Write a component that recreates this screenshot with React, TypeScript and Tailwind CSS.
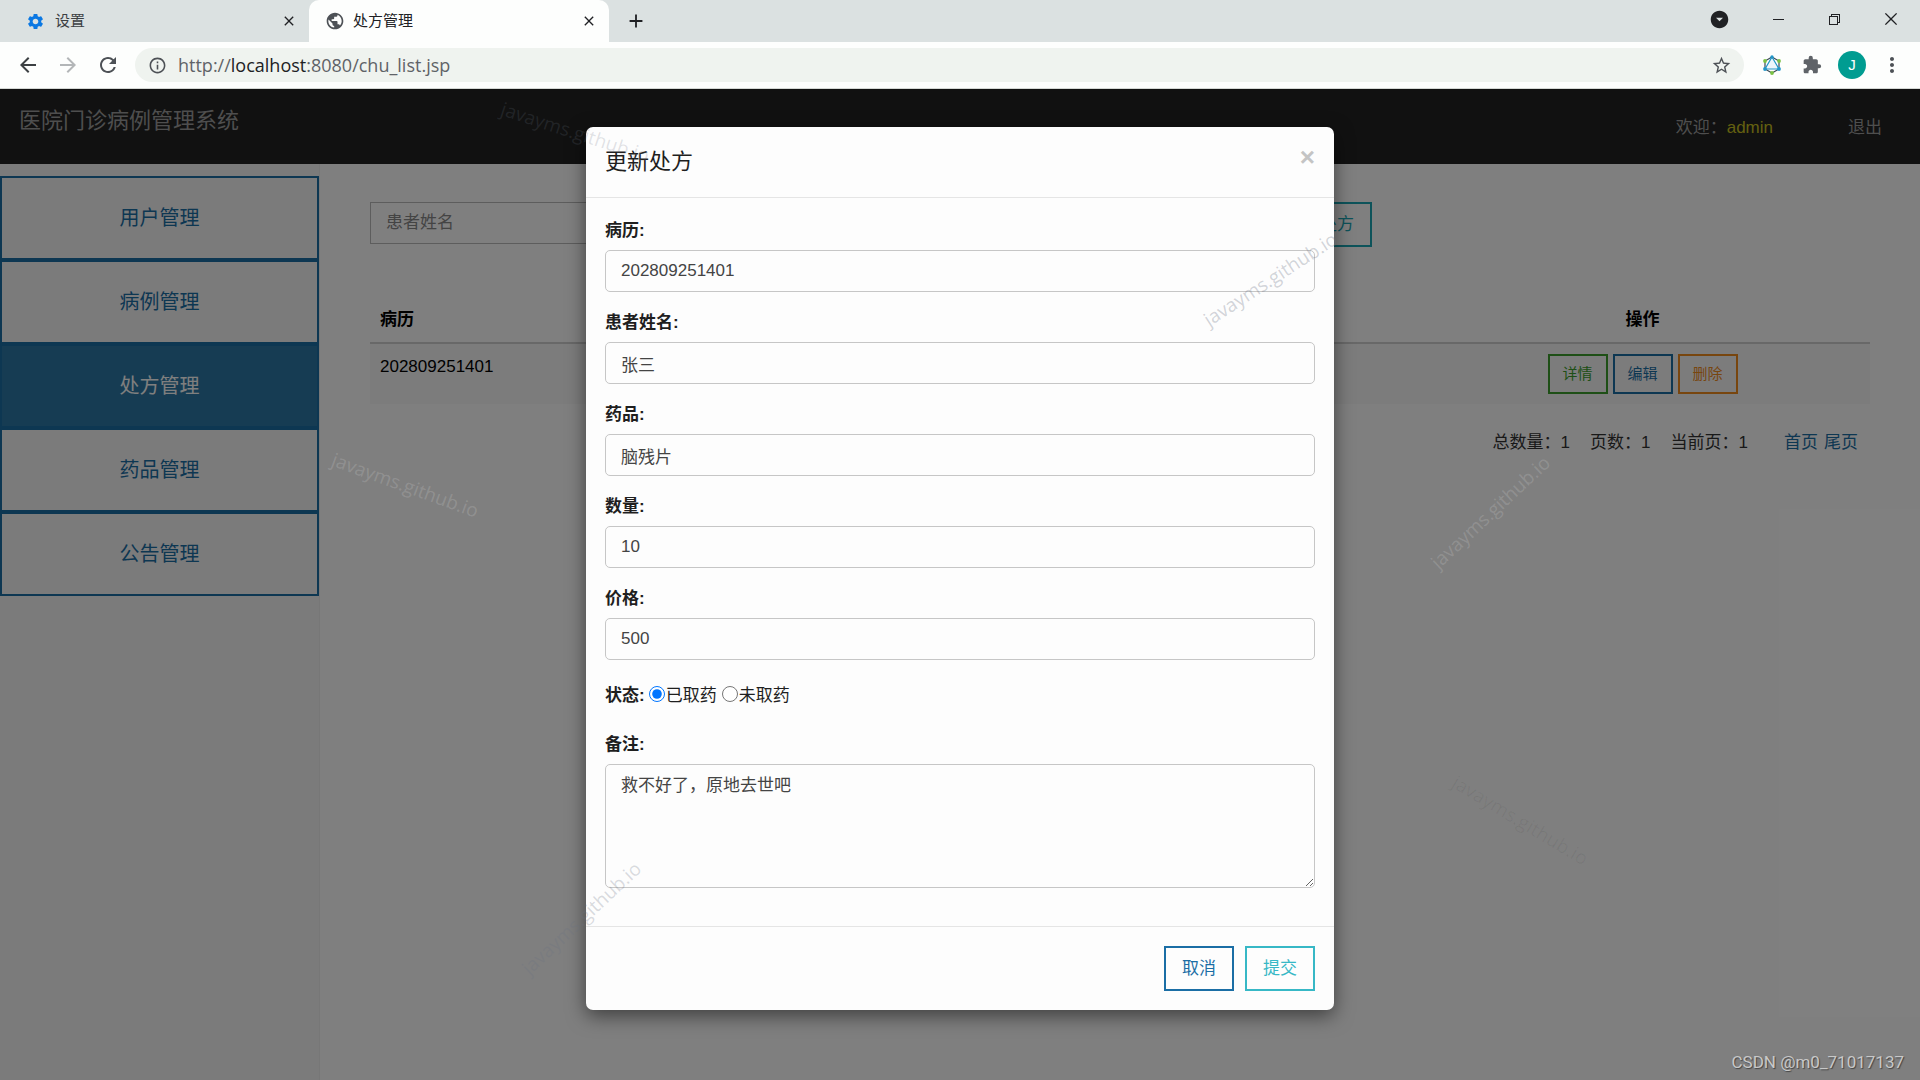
import { useState } from 'react'
import {
  MdSettings, MdPublic, MdClose, MdAdd, MdArrowBack, MdArrowForward, MdRefresh,
  MdInfoOutline, MdStarBorder, MdExtension, MdMoreVert, MdArrowDropDownCircle
} from 'react-icons/md'
import { VscChromeMinimize, VscChromeRestore, VscChromeClose } from 'react-icons/vsc'

const menu = ['用户管理', '病例管理', '处方管理', '药品管理', '公告管理']

const fields = [
  { id: 'record', label: '病历', value: '202809251401' },
  { id: 'patient', label: '患者姓名', value: '张三' },
  { id: 'drug', label: '药品', value: '脑残片' },
  { id: 'count', label: '数量', value: '10' },
  { id: 'price', label: '价格', value: '500' },
]

const marks = [
  'left-[498px] top-[118px] rotate-[18deg] text-gray-500/20',
  'left-[328px] top-[471px] rotate-[20deg] text-white/15',
  'left-[1193px] top-[265px] -rotate-[33deg] text-gray-500/30',
  'left-[1413px] top-[498px] -rotate-[43deg] text-white/15',
  'left-[1443px] top-[806px] rotate-[31deg] text-black/6',
  'left-[504px] top-[904px] -rotate-[43deg] text-gray-500/25',
]

function GraphqlIcon() {
  return (
    <svg width="20" height="20" viewBox="0 0 20 20" fill="none">
      <path d="M10 2 17 6v8l-7 4-7-4V6z" stroke="#3b4a55" strokeWidth="1.2" />
      <path d="M10 2 17 14H3z" fill="#eef6fb" stroke="#2196c8" strokeWidth="1.2" />
      <g fill="#2196c8"><circle cx="10" cy="2" r="1.7" /><circle cx="17" cy="14" r="1.9" /><circle cx="3" cy="14" r="1.9" /></g>
      <g fill="#7ac143"><circle cx="10" cy="18" r="1.9" /><circle cx="17" cy="6" r="1.9" /><circle cx="3" cy="6" r="1.9" /></g>
    </svg>
  )
}

function BrowserBar() {
  return (
    <div className="bg-[#fdfefd]">
      <div className="flex h-[42px] bg-[#dbe1e1] text-[15px] text-[#3c4043]">
        <div className="flex w-[309px] items-center pl-[26px] pr-3">
          <MdSettings size={19} className="text-[#0b78e3]" />
          <span className="ml-[10px] flex-1">设置</span>
          <button aria-label="关闭设置"><MdClose size={16} className="text-[#202124]" /></button>
        </div>
        <div className="flex w-[300px] items-center rounded-t-[10px] bg-[#fdfefd] pl-4 pr-3 text-[#202124]">
          <MdPublic size={20} className="text-[#4d5156]" />
          <span className="ml-2 flex-1">处方管理</span>
          <button aria-label="关闭处方管理"><MdClose size={16} /></button>
        </div>
        <button aria-label="新标签页" className="ml-4"><MdAdd size={22} className="text-[#202124]" /></button>
        <div className="ml-auto flex items-center gap-10 pb-1 pr-5 text-[#202124]">
          <MdArrowDropDownCircle size={21} />
          <button aria-label="最小化"><VscChromeMinimize size={16} /></button>
          <button aria-label="还原"><VscChromeRestore size={16} /></button>
          <button aria-label="关闭窗口"><VscChromeClose size={18} /></button>
        </div>
      </div>
      <div className="flex h-[47px] items-center gap-4 border-b border-[#d5d8d5] pl-4 pr-4 text-[#4d5156]">
        <button aria-label="后退"><MdArrowBack size={24} className="text-[#3c4043]" /></button>
        <button aria-label="前进"><MdArrowForward size={24} className="text-[#b3b6b8]" /></button>
        <button aria-label="刷新"><MdRefresh size={24} /></button>
        <div className="-ml-px flex h-[34px] flex-1 items-center rounded-full bg-[#eff3ef] pl-[13px] pr-3">
          <MdInfoOutline size={19} />
          <span className="ml-[11px] flex-1 font-['Open_Sans',sans-serif] text-lg leading-6 text-[#5f6368]">
            http://<span className="text-[#202124]">localhost</span>:8080/chu_list.jsp
          </span>
          <button aria-label="收藏"><MdStarBorder size={21} /></button>
        </div>
        <div className="ml-0.5 flex items-center gap-5">
          <GraphqlIcon />
          <MdExtension size={20} className="text-[#5f6368]" />
          <span className="-mx-1 flex size-7 items-center justify-center rounded-full bg-[#009c91] text-[15px] text-white">J</span>
          <button aria-label="菜单" className="-ml-0.5"><MdMoreVert size={24} /></button>
        </div>
      </div>
    </div>
  )
}

function PrescriptionTable() {
  return (
    <table className="mt-[49px] w-full text-left">
      <thead>
        <tr className="border-b-2 border-[#d0d0d0]">
          <th className="px-[10px] pb-[10px] pt-[11px] leading-[25px]">病历</th>
          <th className="w-[455px] px-[10px] pb-[10px] pt-[11px] text-center leading-[25px]">操作</th>
        </tr>
      </thead>
      <tbody>
        <tr className="bg-[#f9f9f9]">
          <td className="px-[10px] py-[10px] align-top leading-[25px]">202809251401</td>
          <td className="px-[10px] py-[10px]">
            <div className="flex justify-center gap-[5px] text-[15px]">
              <button className="h-10 w-[60px] border-2 border-[#3c9f2c] text-[#3c9f2c]">详情</button>
              <button className="h-10 w-[60px] border-2 border-[#1b6ea5] text-[#1b6ea5]">编辑</button>
              <button className="h-10 w-[60px] border-2 border-[#f08c1e] text-[#f08c1e]">删除</button>
            </div>
          </td>
        </tr>
      </tbody>
    </table>
  )
}

function UpdateModal({ onClose }: { onClose: () => void }) {
  const [status, setStatus] = useState('taken')

  return (
    <div role="dialog" aria-labelledby="modal-title"
      className="w-[748px] rounded-[7px] bg-[#fdfdfd] text-[#1f1f1f] shadow-[0_6px_19px_rgba(0,0,0,0.5)]">
      <div className="flex items-start justify-between border-b border-[#e5e5e5] p-[19px]">
        <h4 id="modal-title" className="text-[22px] leading-8">更新处方</h4>
        <button aria-label="关闭" onClick={onClose} className="text-[26px] font-bold leading-[22px] text-[#c4c4c4]">×</button>
      </div>

      <div className="px-[19px] py-5">
        {fields.map(f => (
          <div key={f.id} className="mb-[18px]">
            <label htmlFor={f.id} className="mb-[7px] block font-bold leading-[25px]">{f.label}:</label>
            <input id={f.id} defaultValue={f.value}
              className="block h-[42px] w-full rounded-[5px] border border-[#c6c6c6] px-[15px] text-[#444]" />
          </div>
        ))}

        <fieldset className="mb-[18px] flex h-9 items-center">
          <legend className="float-left mr-1 font-bold">状态:</legend>
          <label className="mr-[5px] flex items-center gap-px">
            <input type="radio" name="status" className="mb-1 size-4" checked={status === 'taken'} onChange={() => setStatus('taken')} />已取药
          </label>
          <label className="flex items-center gap-px">
            <input type="radio" name="status" className="mb-1 size-4" checked={status === 'pending'} onChange={() => setStatus('pending')} />未取药
          </label>
        </fieldset>

        <div className="mb-[18px]">
          <label htmlFor="remark" className="mb-[7px] block font-bold leading-[25px]">备注:</label>
          <textarea id="remark" defaultValue="救不好了，原地去世吧"
            className="block h-[124px] w-full rounded-[5px] border border-[#c6c6c6] px-[15px] py-2 leading-[25px] text-[#444]" />
        </div>
      </div>

      <div className="flex justify-end gap-[11px] border-t border-[#e5e5e5] p-[19px]">
        <button onClick={onClose} className="h-[45px] w-[70px] border-2 border-[#1b6ea5] text-[#1b6ea5]">取消</button>
        <button className="h-[45px] w-[70px] border-2 border-[#37b8c6] text-[#37b8c6]">提交</button>
      </div>
    </div>
  )
}

export default function App() {
  const [open, setOpen] = useState(true)

  return (
    <div className="relative flex min-h-screen flex-col overflow-hidden bg-white font-['Liberation_Sans','Noto_Sans_CJK_SC',sans-serif] text-[17px] text-black">
      <BrowserBar />

      <div className="relative flex flex-1 flex-col">
        <header className="flex h-[75px] items-start justify-between bg-[#222] px-[19px] text-[#9d9d9d]">
          <a href="#" className="mt-4 text-[22px] leading-8">医院门诊病例管理系统</a>
          <div className="mr-[19px] mt-[26px] flex leading-[25px]">
            <span>欢迎：<span className="text-[#c8c020]">admin</span></span>
            <a href="#" className="ml-[75px]">退出</a>
          </div>
        </header>

        <div className="flex flex-1">
          {/* 左侧菜单 */}
          <nav className="w-[320px] border-r border-[#eee] bg-[#f7f7f7] pt-3 text-xl">
            {menu.map(name => (
              <a key={name} href="#"
                className={`flex h-[84px] items-center justify-center border-2 border-[#1b6ea5] ${name === '处方管理' ? 'bg-[#2c78a6] text-white' : 'text-[#1b6ea5]'}`}>
                {name}
              </a>
            ))}
          </nav>

          <main className="flex-1 pl-[50px] pr-[50px] pt-[38px]">
            <form className="flex h-[45px] max-w-[1002px] items-start gap-5" onSubmit={e => e.preventDefault()}>
              <input aria-label="患者姓名" placeholder="患者姓名"
                className="h-[42px] flex-1 border border-[#bbb] px-[15px] placeholder:text-[#888]" />
              <button type="button" onClick={() => setOpen(true)}
                className="h-[45px] border-2 border-[#1ba6b4] px-4 text-[#1ba6b4]">添加处方</button>
            </form>

            <PrescriptionTable />

            <div className="mt-[26px] flex justify-end pr-3 leading-[25px] text-[#333]">
              <span>总数量：1</span>
              <span className="ml-5">页数：1</span>
              <span className="ml-5">当前页：1</span>
              <a href="#" className="ml-9 text-[#1b6ea5]">首页</a>
              <a href="#" className="ml-[6px] text-[#1b6ea5]">尾页</a>
            </div>
          </main>
        </div>

        {open && (
          <div className="absolute inset-0 flex items-start justify-center bg-black/50 pt-[38px]">
            <UpdateModal onClose={() => setOpen(false)} />
          </div>
        )}
      </div>

      {/* 水印 */}
      <div className="pointer-events-none absolute inset-0 font-['Open_Sans',sans-serif] text-[19px] leading-7">
        {marks.map(m => <span key={m} className={`absolute ${m}`}>javayms.github.io</span>)}
        <span className="absolute bottom-1.5 right-4 font-[Roboto,sans-serif] text-[17px] leading-6 text-[#c8c8c8] [text-shadow:1px_1px_1px_#444]">CSDN @m0_71017137</span>
      </div>
    </div>
  )
}
